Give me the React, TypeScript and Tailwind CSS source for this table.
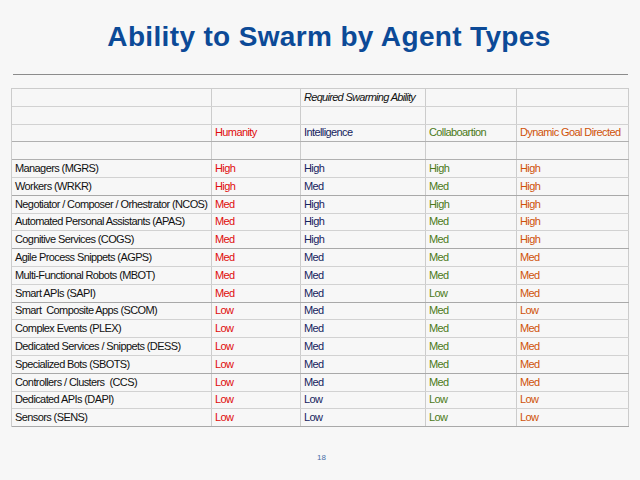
import React from 'react';

type Level = 'High' | 'Med' | 'Low';

interface Row {
  name: string;
  levels: [Level, Level, Level, Level];
  strong?: boolean;
}

const rows: Row[] = [
  { name: 'Managers (MGRS)', levels: ['High', 'High', 'High', 'High'] },
  { name: 'Workers (WRKR)', levels: ['High', 'Med', 'Med', 'High'], strong: true },
  { name: 'Negotiator / Composer / Orhestrator (NCOS)', levels: ['Med', 'High', 'High', 'High'] },
  { name: 'Automated Personal Assistants (APAS)', levels: ['Med', 'High', 'Med', 'High'] },
  { name: 'Cognitive Services (COGS)', levels: ['Med', 'High', 'Med', 'High'], strong: true },
  { name: 'Agile Process Snippets (AGPS)', levels: ['Med', 'Med', 'Med', 'Med'] },
  { name: 'Multi-Functional Robots (MBOT)', levels: ['Med', 'Med', 'Med', 'Med'] },
  { name: 'Smart APIs (SAPI)', levels: ['Med', 'Med', 'Low', 'Med'], strong: true },
  { name: 'Smart  Composite Apps (SCOM)', levels: ['Low', 'Med', 'Med', 'Low'] },
  { name: 'Complex Events (PLEX)', levels: ['Low', 'Med', 'Med', 'Med'] },
  { name: 'Dedicated Services / Snippets (DESS)', levels: ['Low', 'Med', 'Med', 'Med'] },
  { name: 'Specialized Bots (SBOTS)', levels: ['Low', 'Med', 'Med', 'Med'], strong: true },
  { name: 'Controllers / Clusters  (CCS)', levels: ['Low', 'Med', 'Med', 'Med'] },
  { name: 'Dedicated APIs (DAPI)', levels: ['Low', 'Low', 'Low', 'Low'] },
  { name: 'Sensors (SENS)', levels: ['Low', 'Low', 'Low', 'Low'], strong: true },
];

const colColors = ['text-[#e00b0b]', 'text-[#15235e]', 'text-[#4b7a17]', 'text-[#cf5208]'];
const colWidths = ['w-[89px]', 'w-[125px]', 'w-[91px]', 'w-[112px]'];

const Cell: React.FC<{ width: string; className?: string; children?: React.ReactNode }> = ({ width, className = '', children }) => (
  <div className={`${width} shrink-0 h-full border-r border-[#cccccc] pl-[3px] flex items-center whitespace-nowrap overflow-visible ${className}`}>
    {children}
  </div>
);

const HeaderRow: React.FC<{ cells: React.ReactNode[]; strong?: boolean }> = ({ cells, strong }) => (
  <div className={`flex h-[17.8px] border-b ${strong ? 'border-[#b0b0b0]' : 'border-[#d2d2d2]'}`}>
    <Cell width="w-[200px]" />
    {cells.map((c, i) => (
      <Cell key={i} width={colWidths[i]}>
        {c}
      </Cell>
    ))}
  </div>
);

export default function App() {
  return (
    <div className="w-[640px] h-[480px] bg-[#f7f7f7] overflow-hidden relative" style={{ fontFamily: '"Liberation Sans", Arial, sans-serif' }}>
      <h1 className="pt-[21px] pl-[18px] text-center text-[28px] leading-[32px] font-bold text-[#0c4a97] tracking-[0.35px]">
        Ability to Swarm by Agent Types
      </h1>
      <div className="ml-[13px] mr-[12px] mt-[21px] h-px bg-[#8c8c8c]" />

      <div className="ml-[11px] mt-[13px] w-[618px] border-l border-t border-[#cccccc] text-[11px] leading-none text-[#111111] tracking-[-0.6px]">
        <HeaderRow cells={[null, <span className="italic tracking-[-0.7px]">Required Swarming Ability</span>, null, null]} />
        <HeaderRow cells={[null, null, null, null]} />
        <HeaderRow
          strong
          cells={[
            <span className={colColors[0]}>Humanity</span>,
            <span className={colColors[1]}>Intelligence</span>,
            <span className={colColors[2]}>Collaboartion</span>,
            <span className={colColors[3]}>Dynamic Goal Directed</span>,
          ]}
        />
        <HeaderRow strong cells={[null, null, null, null]} />
        {rows.map((r) => (
          <div key={r.name} className={`flex h-[17.8px] border-b ${r.strong ? 'border-[#a9a9a9]' : 'border-[#d2d2d2]'}`}>
            <Cell width="w-[200px]" className="pl-[2px]">
              <span className="whitespace-pre">{r.name}</span>
            </Cell>
            {r.levels.map((l, i) => (
              <Cell key={i} width={colWidths[i]} className={colColors[i]}>
                {l}
              </Cell>
            ))}
          </div>
        ))}
      </div>

      <div className="mt-[27px] ml-[317px] text-[8px] leading-none text-[#4a6ea8]">
        18
      </div>
    </div>
  );
}
